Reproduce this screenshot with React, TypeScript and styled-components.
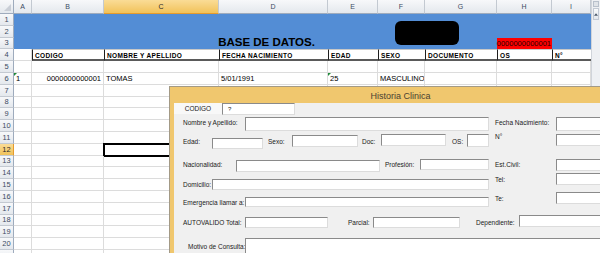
import React from "react";
import styled, { createGlobalStyle, css } from "styled-components";

const COLS = ["A", "B", "C", "D", "E", "F", "G", "H", "I"];
const COL_W = [18, 72, 115, 109, 50, 47, 72, 55, 39];
const ROW_H = 11.8;
const ROWS = Array.from({ length: 21 }, (_, i) => i + 1);

const HEADERS: Record<string, string> = {
  B: "CODIGO",
  C: "NOMBRE Y APELLIDO",
  D: "FECHA NACIMIENTO",
  E: "EDAD",
  F: "SEXO",
  G: "DOCUMENTO",
  H: "OS",
  I: "N°",
};

const DATA: Record<string, { text: string; right?: boolean; flag?: boolean }> = {
  A: { text: "1", flag: true },
  B: { text: "0000000000001", right: true },
  C: { text: "TOMAS" },
  D: { text: "5/01/1991" },
  E: { text: "25", flag: true },
  F: { text: "MASCULINO" },
};

const GlobalStyle = createGlobalStyle`
  html, body {
    margin: 0;
    padding: 0;
    overflow: hidden;
    background: #ffffff;
  }
  body {
    font-family: "Liberation Sans", Arial, sans-serif;
  }
`;

const Screen = styled.div`
  position: relative;
  width: 600px;
  height: 253px;
  overflow: hidden;
`;

/* ---------- spreadsheet ---------- */

const Sheet = styled.div`
  display: grid;
  grid-template-columns: 14px ${COL_W.map((w) => `${w}px`).join(" ")} 9px;
  grid-template-rows: 14px repeat(21, ${ROW_H}px);
`;

const headBg = css`
  background: linear-gradient(#f7f8fa, #e4e8ed);
  color: #3b4b63;
`;

const activeBg = css`
  background: linear-gradient(#fadc96, #f1c25a);
  color: #2a2a2a;
`;

const Corner = styled.div`
  grid-column: 1;
  grid-row: 1;
  position: relative;
  ${headBg};
  border-right: 1px solid #9eabbd;
  border-bottom: 1px solid #9eabbd;
  box-sizing: border-box;

  &::after {
    content: "";
    position: absolute;
    right: 2px;
    bottom: 2px;
    border-left: 7px solid transparent;
    border-bottom: 7px solid #c9ced6;
  }
`;

const ColHead = styled.div<{ $col: number; $active?: boolean }>`
  grid-column: ${(p) => p.$col};
  grid-row: 1;
  display: flex;
  align-items: center;
  justify-content: center;
  font-size: 7px;
  box-sizing: border-box;
  border-right: 1px solid #c3c9d1;
  border-bottom: 1px solid #9eabbd;
  ${(p) => (p.$active ? activeBg : headBg)};
  ${(p) => p.$active && "border-bottom-color: #e59b2c;"}
`;

const RowHead = styled.div<{ $row: number; $active?: boolean }>`
  grid-column: 1;
  grid-row: ${(p) => p.$row};
  display: flex;
  align-items: center;
  justify-content: center;
  font-size: 7.5px;
  box-sizing: border-box;
  border-right: 1px solid #9eabbd;
  border-bottom: 1px solid #c3c9d1;
  ${(p) => (p.$active ? activeBg : headBg)};
  ${(p) => p.$active && "border-right-color: #e59b2c;"}
`;

const Cell = styled.div<{
  $col: number;
  $row: number;
  $right?: boolean;
  $flag?: boolean;
  $selected?: boolean;
}>`
  grid-column: ${(p) => p.$col};
  grid-row: ${(p) => p.$row};
  position: relative;
  display: flex;
  align-items: flex-end;
  justify-content: ${(p) => (p.$right ? "flex-end" : "flex-start")};
  padding: 0 2px 1px;
  box-sizing: border-box;
  font-size: 7.5px;
  line-height: 9px;
  color: #000;
  white-space: nowrap;
  overflow: hidden;
  border-right: 1px solid #dcdcdc;
  border-bottom: 1px solid #dcdcdc;

  ${(p) =>
    p.$flag &&
    css`
      &::before {
        content: "";
        position: absolute;
        left: 0;
        top: 0;
        border-top: 3px solid #1f8a3a;
        border-right: 3px solid transparent;
      }
    `}

  ${(p) =>
    p.$selected &&
    css`
      margin: -1px 0 -1px -1px;
      border: 2px solid #000;
    `}
`;

const HeadCell = styled.div<{ $col: number }>`
  grid-column: ${(p) => p.$col};
  grid-row: 5;
  display: flex;
  align-items: center;
  padding: 1px 2px 0;
  box-sizing: border-box;
  font-size: 6.5px;
  font-weight: 700;
  letter-spacing: 0.35px;
  color: #000;
  white-space: nowrap;
  overflow: hidden;
  border-left: 1px solid #1e1e1e;
  border-top: 1px solid #c8c8c8;
  border-bottom: 2px solid #5a5a5a;
`;

const Band = styled.div`
  grid-column: 2 / 11;
  grid-row: 2 / 5;
  position: relative;
  display: grid;
  grid-template-columns: ${COL_W.map((w) => `${w}px`).join(" ")};
  grid-template-rows: repeat(3, ${ROW_H}px);
  background: #538dd5;
`;

const Title = styled.div`
  grid-column: 2 / 8;
  grid-row: 1 / 4;
  display: flex;
  align-items: flex-end;
  justify-content: center;
  padding: 0 0 1px 4px;
  font-size: 11.5px;
  font-weight: 700;
  color: #000;
`;

const RedCell = styled.div`
  grid-column: 8;
  grid-row: 3;
  display: flex;
  align-items: center;
  justify-content: flex-end;
  padding: 0 1px;
  background: #ff0000;
  font-size: 7.5px;
  line-height: 9px;
  color: #2a0000;
  white-space: nowrap;
`;

const Redaction = styled.div`
  position: absolute;
  left: 381px;
  top: 7px;
  width: 64px;
  height: 24px;
  border-radius: 6px;
  background: #000;
`;

const ScrollBar = styled.div`
  grid-column: 11;
  grid-row: 1 / -1;
  display: flex;
  flex-direction: column;
  background: #eef0f3;
  border-left: 1px solid #d0d4da;
`;

const SplitBox = styled.div`
  height: 4px;
  margin: 1px 1px 0;
  background: #dfe3e8;
  border: 1px solid #b8c0cb;
`;

const ArrowBtn = styled.div`
  height: 10px;
  margin: 1px 1px 0;
  display: flex;
  align-items: center;
  justify-content: center;
  background: linear-gradient(#f9fafb, #e3e7ec);
  border: 1px solid #c2c9d3;

  svg {
    display: block;
  }
`;

/* ---------- userform ---------- */

const Window = styled.div`
  position: absolute;
  left: 169px;
  top: 86px;
  width: 463px;
  height: 200px;
  display: flex;
  flex-direction: column;
  box-sizing: border-box;
  padding: 0 4px;
  border: 1px solid #a39a86;
  background: #f0c76e;
`;

const TitleBar = styled.div`
  height: 16px;
  display: flex;
  align-items: center;
  justify-content: center;
  padding-top: 2px;
  box-sizing: border-box;
  font-size: 9px;
  color: #4a4232;
`;

const Client = styled.div`
  flex: 1;
  display: flex;
  flex-direction: column;
  background: #f0f0f0;
  font-size: 6.5px;
  color: #1a1a1a;
`;

const FormRow = styled.div<{ $h: number; $pl?: number }>`
  display: flex;
  align-items: flex-start;
  flex-shrink: 0;
  height: ${(p) => p.$h}px;
  padding-left: ${(p) => p.$pl ?? 9}px;
`;

const Label = styled.span<{ $w: number; $y: number; $ml?: number; $pl?: number }>`
  flex-shrink: 0;
  width: ${(p) => p.$w}px;
  margin-top: ${(p) => p.$y}px;
  margin-left: ${(p) => p.$ml ?? 0}px;
  padding-left: ${(p) => p.$pl ?? 0}px;
  box-sizing: border-box;
  line-height: 8px;
  white-space: nowrap;
`;

const CodeLabel = styled.span`
  flex-shrink: 0;
  width: 48px;
  height: 11px;
  display: flex;
  align-items: center;
  justify-content: center;
  background: #f8f8f8;
  font-size: 6.5px;
`;

const TextBox = styled.div<{ $w: number; $h: number; $y: number }>`
  flex-shrink: 0;
  width: ${(p) => p.$w}px;
  height: ${(p) => p.$h}px;
  margin-top: ${(p) => p.$y}px;
  box-sizing: border-box;
  background: #ffffff;
  border: 1px solid;
  border-color: #8a8a8a #dcdcdc #dcdcdc #8a8a8a;
  padding: 1px 0 0 5px;
  font-size: 6px;
  line-height: 8px;
`;

function Spreadsheet() {
  const cells: React.ReactNode[] = [];
  ROWS.forEach((r) => {
    if (r <= 3) return;
    COLS.forEach((c, i) => {
      const col = i + 2;
      const row = r + 1;
      if (r === 4 && c !== "A") {
        cells.push(
          <HeadCell key={`${c}${r}`} $col={col}>
            {HEADERS[c]}
          </HeadCell>
        );
        return;
      }
      const d = r === 6 ? DATA[c] : undefined;
      cells.push(
        <Cell
          key={`${c}${r}`}
          $col={col}
          $row={row}
          $right={d?.right}
          $flag={d?.flag}
          $selected={r === 12 && c === "C"}
        >
          {d?.text}
        </Cell>
      );
    });
  });

  return (
    <Sheet>
      <Corner />
      {COLS.map((c, i) => (
        <ColHead key={c} $col={i + 2} $active={c === "C"}>
          {c}
        </ColHead>
      ))}
      {ROWS.map((r) => (
        <RowHead key={r} $row={r + 1} $active={r === 12}>
          {r < 21 ? r : null}
        </RowHead>
      ))}
      <Band>
        <Title>BASE DE DATOS.</Title>
        <RedCell>0000000000001</RedCell>
        <Redaction />
      </Band>
      {cells}
      <ScrollBar>
        <SplitBox />
        <ArrowBtn>
          <svg width="5" height="3" viewBox="0 0 5 3">
            <path d="M0 3 L2.5 0 L5 3 Z" fill="#4d5a6c" />
          </svg>
        </ArrowBtn>
      </ScrollBar>
    </Sheet>
  );
}

function HistoriaForm() {
  return (
    <Window>
      <TitleBar>Historia Clinica</TitleBar>
      <Client>
        <FormRow $h={13} $pl={0}>
          <CodeLabel>CODIGO</CodeLabel>
          <TextBox $w={73} $h={12} $y={0}>
            ?
          </TextBox>
        </FormRow>
        <FormRow $h={17}>
          <Label $w={62} $y={3}>Nombre y Apellido:</Label>
          <TextBox $w={244} $h={14} $y={1} />
          <Label $w={61} $y={3} $ml={6}>Fecha Nacimiento:</Label>
          <TextBox $w={60} $h={14} $y={1} />
        </FormRow>
        <FormRow $h={17}>
          <Label $w={29} $y={5}>Edad:</Label>
          <TextBox $w={51} $h={11} $y={5} />
          <Label $w={24} $y={5} $ml={5}>Sexo:</Label>
          <TextBox $w={66} $h={12} $y={2} />
          <Label $w={19} $y={5} $ml={4}>Doc:</Label>
          <TextBox $w={65} $h={12} $y={1} />
          <Label $w={15} $y={5} $ml={6}>OS:</Label>
          <TextBox $w={22} $h={13} $y={1} />
          <Label $w={61} $y={0} $ml={6}>N°</Label>
          <TextBox $w={60} $h={12} $y={1} />
        </FormRow>
        <FormRow $h={22}>
          <Label $w={53} $y={11}>Nacionalidad:</Label>
          <TextBox $w={144} $h={12} $y={10} />
          <Label $w={35} $y={11} $ml={5}>Profesión:</Label>
          <TextBox $w={69} $h={11} $y={9} />
          <Label $w={61} $y={11} $ml={6}>Est.Civil:</Label>
          <TextBox $w={60} $h={12} $y={9} />
        </FormRow>
        <FormRow $h={19}>
          <Label $w={29} $y={9}>Domicilio:</Label>
          <TextBox $w={277} $h={11} $y={7} />
          <Label $w={61} $y={4} $ml={6}>Tel:</Label>
          <TextBox $w={60} $h={12} $y={1} />
        </FormRow>
        <FormRow $h={16}>
          <Label $w={62} $y={8}>Emergencia llamar a:</Label>
          <TextBox $w={244} $h={10} $y={6} />
          <Label $w={61} $y={4} $ml={6}>Te:</Label>
          <TextBox $w={60} $h={12} $y={1} />
        </FormRow>
        <FormRow $h={21}>
          <Label $w={62} $y={12}>AUTOVALIDO Total:</Label>
          <TextBox $w={83} $h={11} $y={10} />
          <Label $w={25} $y={12} $ml={20}>Parcial:</Label>
          <TextBox $w={87} $h={11} $y={10} />
          <Label $w={43} $y={12} $ml={16}>Dependiente:</Label>
          <TextBox $w={100} $h={12} $y={8} />
        </FormRow>
        <FormRow $h={40}>
          <Label $w={62} $y={15} $pl={5}>Motivo de Consulta:</Label>
          <TextBox $w={400} $h={30} $y={10} />
        </FormRow>
      </Client>
    </Window>
  );
}

export default function App() {
  return (
    <Screen>
      <GlobalStyle />
      <Spreadsheet />
      <HistoriaForm />
    </Screen>
  );
}
